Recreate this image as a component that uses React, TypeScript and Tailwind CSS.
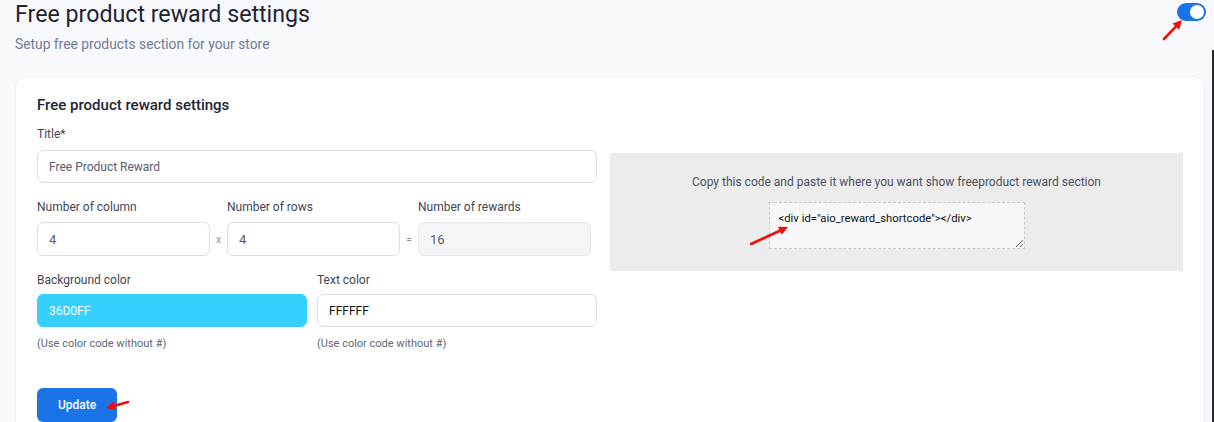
import React from "react";

function Arrow({ x1, y1, x2, y2 }: { x1: number; y1: number; x2: number; y2: number }) {
  const dx = x2 - x1;
  const dy = y2 - y1;
  const len = Math.sqrt(dx * dx + dy * dy);
  const ux = dx / len;
  const uy = dy / len;
  const hl = 9;
  const hw = 4.5;
  const bx = x2 - ux * hl;
  const by = y2 - uy * hl;
  const p1 = `${bx - uy * hw},${by + ux * hw}`;
  const p2 = `${bx + uy * hw},${by - ux * hw}`;
  return (
    <g>
      <line x1={x1} y1={y1} x2={bx} y2={by} stroke="#f20d0d" strokeWidth={2.6} strokeLinecap="round" />
      <polygon points={`${x2},${y2} ${p1} ${p2}`} fill="#f20d0d" />
    </g>
  );
}

export default function App() {
  return (
    <div
      className="relative w-[1214px] h-[422px] overflow-hidden bg-[#f8f9fd]"
      style={{ fontFamily: "Roboto, 'Liberation Sans', sans-serif" }}
    >
      <div className="pl-[15px] pr-[9px]">
        <div className="flex items-start justify-between">
          <div>
            <h1 className="text-[23.2px] leading-[28px] text-[#1f2433] font-normal">Free product reward settings</h1>
            <p className="mt-[6px] text-[13.8px] leading-[20px] text-[#6f7c97]">Setup free products section for your store</p>
          </div>
          <div className="mt-[3px] mr-[-1px] w-[29px] h-[18px] rounded-full bg-[#1a73e8] flex items-center justify-end pr-[2px]">
            <div className="w-[14px] h-[14px] rounded-full bg-white" />
          </div>
        </div>

        <div className="mt-[22px] h-[400px] rounded-xl border border-[#eceef3] bg-white px-[21px] pt-[17px]">
          <h2 className="text-[15px] leading-[22px] font-medium text-[#1f2433]">Free product reward settings</h2>
          <div className="mt-[9px] flex gap-[13px]">
            <div className="w-[560px]">
              <label className="block text-[12px] leading-[18px] text-[#3f4654]">Title*</label>
              <input
                readOnly
                value="Free Product Reward"
                className="mt-[7px] w-full h-[33px] rounded-md border border-[#dcdfe4] bg-white px-[11px] text-[12px] text-[#555d6b] outline-none"
              />

              <div className="mt-[15px] flex items-end">
                <div className="w-[173px]">
                  <label className="block text-[12px] leading-[18px] text-[#3f4654]">Number of column</label>
                  <input
                    readOnly
                    value="4"
                    className="mt-[6px] w-full h-[34px] rounded-md border border-[#dcdfe4] bg-white px-[11px] text-[13px] text-[#555d6b] outline-none"
                  />
                </div>
                <span className="w-[17px] h-[34px] flex items-center justify-center text-[10px] text-[#8a909c]">x</span>
                <div className="w-[173px]">
                  <label className="block text-[12px] leading-[18px] text-[#3f4654]">Number of rows</label>
                  <input
                    readOnly
                    value="4"
                    className="mt-[6px] w-full h-[34px] rounded-md border border-[#dcdfe4] bg-white px-[11px] text-[13px] text-[#555d6b] outline-none"
                  />
                </div>
                <span className="w-[18px] h-[34px] flex items-center justify-center text-[10px] text-[#8a909c]">=</span>
                <div className="w-[173px]">
                  <label className="block text-[12px] leading-[18px] text-[#3f4654]">Number of rewards</label>
                  <input
                    readOnly
                    value="16"
                    className="mt-[6px] w-full h-[34px] rounded-md border border-[#e7e9ed] bg-[#f4f5f7] px-[11px] text-[13px] text-[#555d6b] outline-none"
                  />
                </div>
              </div>

              <div className="mt-[15px] flex gap-[10px]">
                <div className="w-[270px]">
                  <label className="block text-[12px] leading-[18px] text-[#3f4654]">Background color</label>
                  <input
                    readOnly
                    value="36D0FF"
                    className="mt-[5px] w-full h-[33px] rounded-md border border-[#36d0ff] bg-[#36d0ff] px-[11px] text-[12px] text-white outline-none"
                  />
                  <p className="mt-[9px] text-[11px] leading-[16px] text-[#5f6673]">(Use color code without #)</p>
                </div>
                <div className="w-[280px]">
                  <label className="block text-[12px] leading-[18px] text-[#3f4654]">Text color</label>
                  <input
                    readOnly
                    value="FFFFFF"
                    className="mt-[5px] w-full h-[33px] rounded-md border border-[#dcdfe4] bg-white px-[11px] text-[12px] text-[#111111] outline-none"
                  />
                  <p className="mt-[9px] text-[11px] leading-[16px] text-[#5f6673]">(Use color code without #)</p>
                </div>
              </div>

              <button className="mt-[36px] w-[80px] h-[34px] rounded-md bg-[#1b73e8] text-[12px] font-medium text-white">
                Update
              </button>
            </div>

            <div className="flex-1 mt-[28px]">
              <div className="h-[118px] bg-[#ececec] pt-[20px] flex flex-col items-center">
                <p className="text-[12px] leading-[18px] text-[#4b5260]">
                  Copy this code and paste it where you want show freeproduct reward section
                </p>
                <textarea
                  readOnly
                  defaultValue={'<div id="aio_reward_shortcode"></div>'}
                  className="mt-[11px] w-[256px] h-[47px] border border-dashed border-[#c9c9c9] bg-[#f7f7f7] px-[9px] pt-[8px] text-[11.3px] leading-[16px] text-[#111111] outline-none resize"
                  style={{ fontFamily: "Roboto, 'Liberation Sans', sans-serif" }}
                />
              </div>
            </div>
          </div>
        </div>
      </div>

      <div className="absolute right-0 top-[50px] bottom-0 w-[2px] bg-[#2b2b2b]" />

      <svg className="absolute inset-0 pointer-events-none" width={1214} height={422}>
        <Arrow x1={1164} y1={39} x2={1182} y2={20} />
        <Arrow x1={751} y1={244} x2={788} y2={227} />
        <Arrow x1={128} y1={402} x2={106} y2={408} />
      </svg>
    </div>
  );
}
